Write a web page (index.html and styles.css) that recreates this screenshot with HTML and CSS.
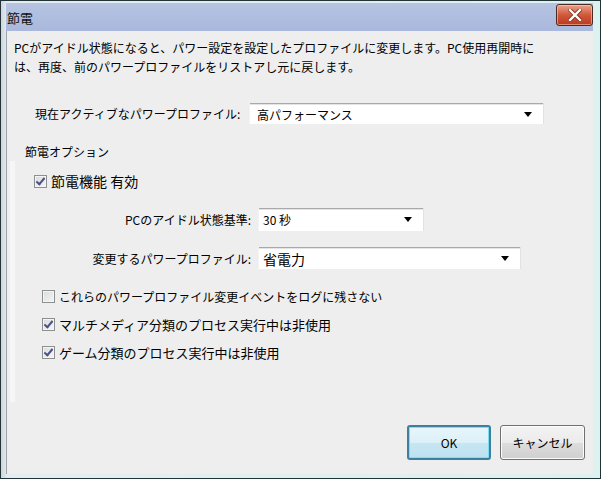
FILE: index.html
```html
<!DOCTYPE html>
<html lang="ja">
<head>
    <meta charset="UTF-8">
    <title>節電</title>
    <link rel="stylesheet" href="styles.css">
</head>
<body>
    <div class="window">
        <div class="titlebar">
            <span class="title">節電</span>
            <span class="close-btn">
                <svg width="14" height="12" viewBox="0 0 14 12">
                    <path d="M2 1 L12 11 M12 1 L2 11" stroke="#8a2a18" stroke-width="4" stroke-linecap="square"/>
                    <path d="M2 1 L12 11 M12 1 L2 11" stroke="#fff" stroke-width="2.4" stroke-linecap="square"/>
                </svg>
            </span>
        </div>
        <div class="client">
            <p class="desc">PCがアイドル状態になると、パワー設定を設定したプロファイルに変更します。PC使用再開時に<br>は、再度、前のパワープロファイルをリストアし元に戻します。</p>

            <div class="row row-active">
                <span class="label">現在アクティブなパワープロファイル:</span>
                <div class="combo combo-wide">
                    <span>高パフォーマンス</span>
                    <span class="arrow"></span>
                </div>
            </div>

            <div class="group">
                <div class="group-title">節電オプション</div>
                <div class="group-body">
                    <label class="check check-main">
                        <span class="box checked"></span>
                        <span>節電機能 有効</span>
                    </label>

                    <div class="row row-form">
                        <span class="label label-right">PCのアイドル状態基準:</span>
                        <div class="combo combo-short">
                            <span>30 秒</span>
                            <span class="arrow"></span>
                        </div>
                    </div>
                    <div class="row row-form">
                        <span class="label label-right">変更するパワープロファイル:</span>
                        <div class="combo combo-mid">
                            <span class="big">省電力</span>
                            <span class="arrow"></span>
                        </div>
                    </div>

                    <div class="check-list">
                        <label class="check">
                            <span class="box"></span>
                            <span>これらのパワープロファイル変更イベントをログに残さない</span>
                        </label>
                        <label class="check check-lg">
                            <span class="box checked"></span>
                            <span>マルチメディア分類のプロセス実行中は非使用</span>
                        </label>
                        <label class="check check-lg">
                            <span class="box checked"></span>
                            <span>ゲーム分類のプロセス実行中は非使用</span>
                        </label>
                    </div>
                </div>
            </div>

            <div class="buttons">
                <button class="btn btn-default">OK</button>
                <button class="btn">キャンセル</button>
            </div>
        </div>
    </div>
</body>
</html>
```

FILE: styles.css
```css
body {
    margin: 0;
    font-family: "Noto Sans CJK JP", sans-serif;
    font-size: 12px;
    color: #000;
    background: #fff;
}
.window {
    width: 601px;
    height: 479px;
    box-sizing: border-box;
    border: 1px solid #22343a;
    padding: 2px 7px 4px 5px;
    background: linear-gradient(to right, #cfd6dc 0, #e4ecef 6px, #dcf2ee 100%);
    display: flex;
    flex-direction: column;
}
.titlebar {
    height: 28px;
    background: linear-gradient(#b6c3e2, #a9b8dc);
    display: flex;
    align-items: center;
    justify-content: space-between;
    padding-left: 1px;
}
.title {
    font-size: 13px;
    color: #111;
}
.close-btn {
    width: 35px;
    height: 20px;
    margin-top: -5px;
    border: 1px solid #4a2a24;
    border-radius: 3px;
    background: linear-gradient(#e9a48c, #d0583b 50%, #b93a20 100%);
    display: flex;
    align-items: center;
    justify-content: center;
    box-shadow: inset 0 0 0 1px rgba(255, 220, 200, 0.5);
}
.client {
    flex: 1;
    background: #eeeeee;
    border-left: 1px solid #9aa3a8;
    position: relative;
    display: flex;
    flex-direction: column;
}
.desc {
    margin: 7px 0 0 7px;
    line-height: 19px;
}
.row {
    display: flex;
    align-items: center;
}
.row-active {
    margin: 27px 0 0 28px;
}
.row-active .label {
    width: 215px;
}
.combo {
    height: 21px;
    background: #fff;
    border-top: 1px solid #a9a9a9;
    box-shadow: inset 0 1px 0 #e4e4e4, 1px 0 0 #e2e2e2, -1px 0 0 #f3f3f3;
    display: flex;
    align-items: center;
    justify-content: space-between;
    padding: 0 11px 0 7px;
    box-sizing: border-box;
}
.combo-wide {
    width: 293px;
}
.combo-short {
    width: 164px;
    height: 23px;
    padding-left: 4px;
}
.combo-mid {
    width: 261px;
    height: 22px;
    padding-left: 4px;
}
.big {
    font-size: 14px;
}
.arrow {
    width: 0;
    height: 0;
    border-left: 4px solid transparent;
    border-right: 4px solid transparent;
    border-top: 5px solid #000;
}
.group {
    margin-top: 19px;
    display: flex;
    flex-direction: column;
}
.group-title {
    margin-left: 18px;
    line-height: 18px;
}
.group-body {
    margin-left: 3px;
    border-left: 5px solid #e2e2e2;
    border-image: linear-gradient(to right, #f6f6f6, #dddddd) 1;
    height: 241px;
    box-sizing: border-box;
    padding-top: 11px;
}
.check {
    display: flex;
    align-items: center;
    height: 18px;
}
.box {
    width: 11px;
    height: 11px;
    border: 1px solid #8e8f8f;
    background: linear-gradient(135deg, #d9dadb, #f6f6f6);
    box-shadow: inset 0 0 0 1px #f4f4f4;
    margin-right: 4px;
    position: relative;
}
.box.checked::after {
    content: "";
    position: absolute;
    left: 3px;
    top: 0px;
    width: 3px;
    height: 7px;
    border-right: 2px solid #4b4f86;
    border-bottom: 2px solid #4b4f86;
    transform: rotate(40deg);
}
.check-main {
    margin-left: 19px;
    font-size: 14px;
}
.row-form {
    height: 24px;
}
.check-main + .row-form {
    margin-top: 17px;
}
.row-form + .row-form {
    margin-top: 15px;
}
.label-right {
    width: 236px;
    text-align: right;
    margin-right: 8px;
}
.check-list {
    margin: 17px 0 0 27px;
    display: flex;
    flex-direction: column;
    gap: 10px;
}
.check-lg {
    font-size: 13px;
}
.buttons {
    position: absolute;
    right: 8px;
    bottom: 14px;
    display: flex;
    gap: 9px;
}
.btn {
    width: 85px;
    height: 35px;
    font-family: "Noto Sans CJK JP", sans-serif;
    font-size: 12px;
    color: #000;
    border: 1px solid #707070;
    border-radius: 3px;
    background: linear-gradient(#f3f3f3 0, #ebebeb 50%, #dddddd 51%, #cfcfcf 100%);
    box-shadow: inset 0 0 0 1px #fcfcfc;
    padding: 0;
}
.btn-default {
    width: 84px;
    border: 2px solid #3c7fa1;
    background: linear-gradient(#e8f6fc 0, #dcf0f8 50%, #c6e6f4 51%, #bde1f1 100%);
    box-shadow: inset 0 0 0 1px #7de0f2;
}
```
